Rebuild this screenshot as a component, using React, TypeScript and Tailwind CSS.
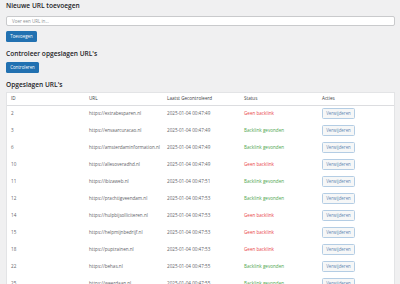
import React from "react";

interface UrlRow {
  id: number;
  url: string;
  checked: string;
  found: boolean;
}

const rows: UrlRow[] = [
  { id: 2, url: "https://extrabesparen.nl", checked: "2025-01-04 00:47:49", found: false },
  { id: 3, url: "https://envaarcuracao.nl", checked: "2025-01-04 00:47:49", found: true },
  { id: 6, url: "https://amsterdaminformation.nl", checked: "2025-01-04 00:47:49", found: true },
  { id: 10, url: "https://allesoveradhd.nl", checked: "2025-01-04 00:47:49", found: false },
  { id: 11, url: "https://ibizaweb.nl", checked: "2025-01-04 00:47:51", found: true },
  { id: 12, url: "https://prachtigveendam.nl", checked: "2025-01-04 00:47:53", found: true },
  { id: 14, url: "https://hulpbijsolliciteren.nl", checked: "2025-01-04 00:47:53", found: false },
  { id: 15, url: "https://helpmijnbedrijf.nl", checked: "2025-01-04 00:47:53", found: false },
  { id: 18, url: "https://puptrainen.nl", checked: "2025-01-04 00:47:53", found: false },
  { id: 22, url: "https://behas.nl", checked: "2025-01-04 00:47:55", found: true },
  { id: 25, url: "https://weerdaan.nl", checked: "2025-01-04 00:47:55", found: true },
];

const font = { fontFamily: '"Open Sans", "Liberation Sans", sans-serif' };

const App: React.FC = () => {
  return (
    <div
      className="min-h-[284px] bg-[#f0f0f1] pl-[6px] pr-[5px] pt-[2px] text-[#1d2327] antialiased"
      style={font}
    >
      {/* Toevoegen */}
      <h2 className="text-[6.6px] leading-[8px] font-semibold">Nieuwe URL toevoegen</h2>
      <div className="mt-[6px] h-[10px] rounded-[2px] border border-[#c9cacc] bg-white pl-[5px] flex items-center">
        <span className="text-[4.5px] text-[#8c8f94]">Voer een URL in...</span>
      </div>
      <button className="mt-[5px] block h-[11px] w-[31px] rounded-[1.5px] bg-[#2271b1] text-[4.4px] text-white">
        Toevoegen
      </button>

      {/* Controleren */}
      <h2 className="mt-2 text-[6.6px] leading-[8px] font-semibold">Controleer opgeslagen URL's</h2>
      <button className="mt-1 block h-[11px] w-[33px] rounded-[1.5px] bg-[#2271b1] text-[4.4px] text-white">
        Controleren
      </button>

      {/* Tabel */}
      <h2 className="mt-[7.5px] text-[6.6px] leading-[8px] font-semibold">Opgeslagen URL's</h2>
      <div className="mt-[3.5px] border border-[#e3e4e6] bg-white">
        <table className="w-full table-fixed border-collapse text-[4.6px] text-[#5f6368]">
          <colgroup>
            <col className="w-[78px]" />
            <col className="w-[78px]" />
            <col className="w-[77px]" />
            <col className="w-[78px]" />
            <col />
          </colgroup>
          <thead>
            <tr className="h-[12px] border-b border-[#dcdde0] text-left">
              <th className="px-[4px] font-normal text-[#3c4045]">ID</th>
              <th className="px-[4px] font-normal text-[#3c4045]">URL</th>
              <th className="px-[4px] font-normal text-[#3c4045]">Laatst Gecontroleerd</th>
              <th className="px-[4px] font-normal text-[#3c4045]">Status</th>
              <th className="px-[4px] font-normal text-[#3c4045]">Acties</th>
            </tr>
          </thead>
          <tbody>
            {rows.map((r) => (
              <tr key={r.id} className="h-[17px]">
                <td className="px-[4px]">{r.id}</td>
                <td className="px-[4px] whitespace-nowrap">{r.url}</td>
                <td className="px-[4px] whitespace-nowrap">{r.checked}</td>
                <td className={`px-[4px] ${r.found ? "text-[#4ea64f]" : "text-[#e9454a]"}`}>
                  {r.found ? "Backlink gevonden" : "Geen backlink"}
                </td>
                <td className="px-[4px]">
                  <button className="block h-[11px] w-[33px] rounded-[1.5px] border border-[#b4cde4] bg-[#f6f7f7] text-[4.4px] text-[#5f86b3]">
                    Verwijderen
                  </button>
                </td>
              </tr>
            ))}
          </tbody>
        </table>
      </div>
    </div>
  );
};

export default App;
